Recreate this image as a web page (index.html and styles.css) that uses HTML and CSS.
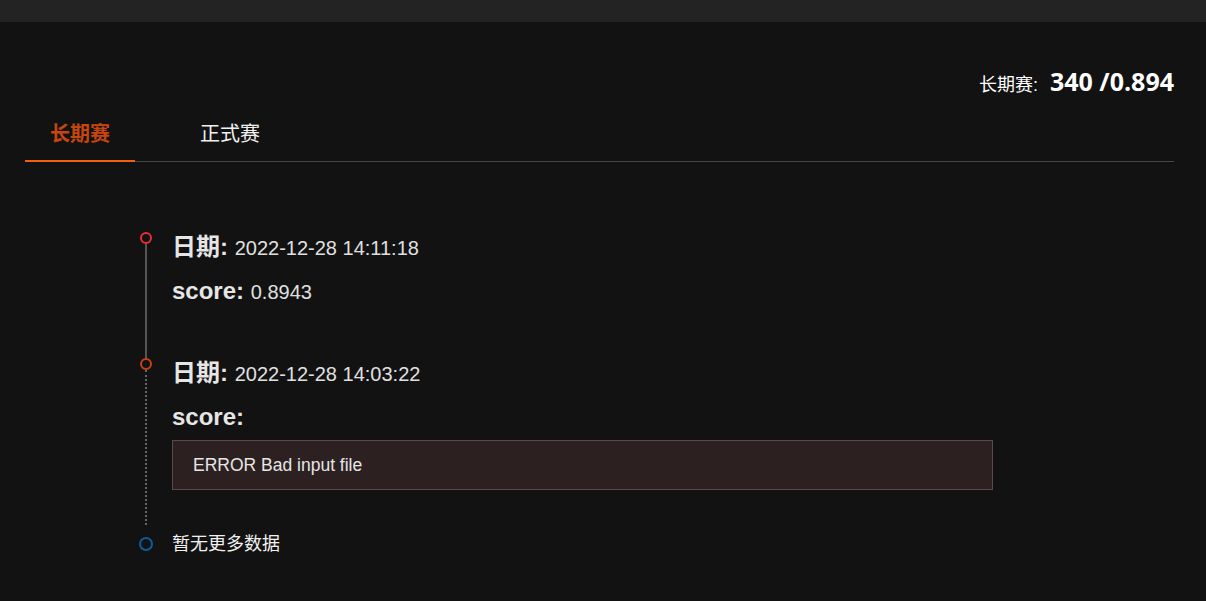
FILE: index.html
```html
<!DOCTYPE html>
<html lang="zh">
<head>
    <meta charset="UTF-8">
    <title>提交记录</title>
    <link rel="stylesheet" href="styles.css">
</head>
<body>
    <div class="top-bar"></div>

    <div class="page">
        <div class="best-score">
            <span class="best-label">长期赛:</span>
            <span class="best-value">340 /0.894</span>
        </div>

        <div class="tabs">
            <div class="tab active">长期赛</div>
            <div class="tab">正式赛</div>
        </div>

        <!-- 提交记录时间线 -->
        <ul class="timeline">
            <li class="item solid">
                <span class="dot red"></span>
                <p class="row"><b>日期:</b> <span class="val">2022-12-28 14:11:18</span></p>
                <p class="row score"><b>score:</b> <span class="val">0.8943</span></p>
            </li>
            <li class="item dotted">
                <span class="dot orange"></span>
                <p class="row"><b>日期:</b> <span class="val">2022-12-28 14:03:22</span></p>
                <p class="row score"><b>score:</b></p>
                <div class="error-box">ERROR Bad input file</div>
            </li>
            <li class="item last">
                <span class="dot blue"></span>
                <p class="row empty">暂无更多数据</p>
            </li>
        </ul>
    </div>
</body>
</html>
```

FILE: styles.css
```css
/* Reset */
* {
    margin: 0;
    padding: 0;
    box-sizing: border-box;
}

body {
    font-family: 'Liberation Sans', Arial, 'Noto Sans CJK SC', sans-serif;
    background-color: #121212;
    color: #e4e4e4;
}

/* Barra superior */
.top-bar {
    height: 22px;
    background-color: #232323;
}

.page {
    padding: 0 32px 0 25px;
}

/* Mejor puntuación */
.best-score {
    display: flex;
    justify-content: flex-end;
    align-items: baseline;
    margin-top: 44px;
    height: 30px;
    line-height: 30px;
}

.best-label {
    font-size: 18px;
    color: #ffffff;
    margin-right: 12px;
}

.best-value {
    font-family: 'Open Sans', sans-serif;
    font-size: 25px;
    font-weight: bold;
    color: #ffffff;
}

/* Pestañas */
.tabs {
    display: flex;
    margin-top: 12px;
    border-bottom: 1px solid #474747;
}

.tab {
    width: 110px;
    margin-right: 40px;
    text-align: center;
    font-size: 20px;
    line-height: 52px;
    color: #f0f0f0;
    margin-bottom: -1px;
    border-bottom: 2px solid transparent;
}

.tab.active {
    color: #c8460e;
    font-weight: bold;
    border-bottom-color: #f0600e;
}

/* Línea de tiempo */
.timeline {
    list-style: none;
    margin: 69px 0 0 115px;
}

.item {
    position: relative;
    padding-left: 32px;
}

.item.solid {
    padding-bottom: 50px;
}

.item.dotted {
    padding-bottom: 38px;
}

.item.solid::before,
.item.dotted::before {
    content: "";
    position: absolute;
    left: 5px;
    top: 13px;
    bottom: -2px;
    border-left: 2px solid #555555;
}

.item.dotted::before {
    border-left: 2px dotted #666666;
    bottom: 3px;
}

.dot {
    position: absolute;
    left: 0;
    top: 1px;
    width: 12px;
    height: 12px;
    border-radius: 50%;
    border: 2px solid;
    background-color: #121212;
}

.dot.red {
    border-color: #e3303c;
}

.dot.orange {
    border-color: #c8420e;
}

.dot.blue {
    left: -1px;
    top: 9px;
    width: 14px;
    height: 14px;
    border-color: #0b5c9c;
}

.row {
    height: 32px;
    line-height: 32px;
    font-size: 24px;
    color: #e6e6e6;
}

.row b {
    font-weight: bold;
}

.row .val {
    font-size: 20px;
    line-height: 1;
    color: #e0e0e0;
}

.row.score {
    margin-top: 12px;
}

.row.empty {
    font-size: 18px;
    color: #f0f0f0;
}

.error-box {
    margin-top: 7px;
    width: 821px;
    height: 50px;
    line-height: 48px;
    padding: 0 20px;
    font-size: 17.5px;
    color: #e6e6e6;
    background-color: #2c2120;
    border: 1px solid #5b4a48;
}
```
